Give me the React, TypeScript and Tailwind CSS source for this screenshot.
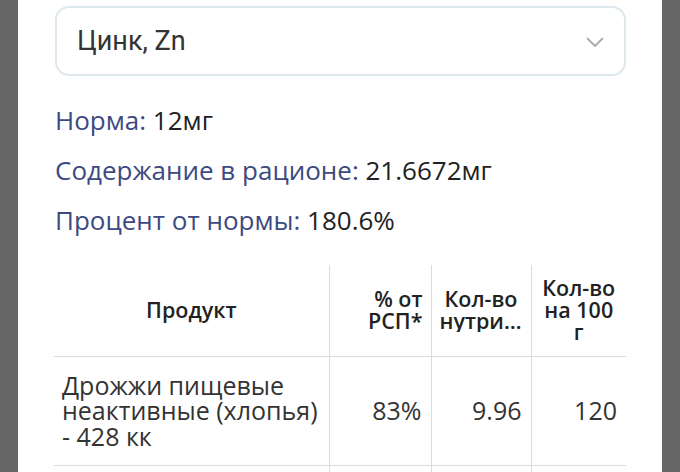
interface StatLineProps {
  label: string;
  value: string;
}

const StatLine: React.FC<StatLineProps> = ({ label, value }) => (
  <div className="text-[26px] leading-[30px] h-[30px] mb-[20px] whitespace-nowrap">
    <span className="text-[#3d4a7f] font-medium">{label}</span>{' '}
    <span className="text-[#222]">{value}</span>
  </div>
);

const rows = [
  { name: 'Дрожжи пищевые неактивные (хлопья) - 428 кк', percent: '83%', amount: '9.96', per100: '120' },
  { name: 'Семена тыквы - 559 кк', percent: '52%', amount: '6.24', per100: '7.8' },
];

export default function App() {
  return (
    <div className="w-[680px] h-[472px] overflow-hidden bg-[#666666] px-[18px] font-['Open_Sans',sans-serif]">
      <div className="h-full bg-white pl-[37px] pr-[36px] pt-[6px]">
        <button className="w-full h-[70px] flex items-center justify-between rounded-[14px] border-2 border-[#dde8ee] bg-white pl-[20px] pr-[20px]">
          <span className="font-['Roboto',sans-serif] text-[27px] text-[#333]">Цинк, Zn</span>
          <svg width="18" height="11" viewBox="0 0 18 11" className="mt-[3px]" fill="none">
            <path d="M1.5 1.5 L9 9 L16.5 1.5" stroke="#aaaaaa" strokeWidth="1.8" strokeLinecap="round" strokeLinejoin="round" />
          </svg>
        </button>

        <div className="mt-[29px]">
          <StatLine label="Норма:" value="12мг" />
          <StatLine label="Содержание в рационе:" value="21.6672мг" />
          <StatLine label="Процент от нормы:" value="180.6%" />
        </div>

        <table className="w-[572px] table-fixed border-collapse mt-[30px] -ml-[1px]">
          <colgroup>
            <col className="w-[275px]" />
            <col className="w-[102px]" />
            <col className="w-[100px]" />
            <col className="w-[95px]" />
          </colgroup>
          <thead>
            <tr className="h-[91px] border-b border-[#dcdcdc] text-[21.5px] leading-[22px] text-[#222]">
              <th className="px-2 text-center font-semibold">Продукт</th>
              <th className="px-2 text-right font-semibold border-l border-[#dcdcdc]">
                % от
                <br />
                РСП*
              </th>
              <th className="px-2 text-center font-semibold border-l border-[#dcdcdc]">
                <div>Кол-во</div>
                <div className="truncate">нутриента</div>
              </th>
              <th className="px-2 text-center font-semibold border-l border-[#dcdcdc]">
                Кол-во
                <br />
                на 100
                <br />г
              </th>
            </tr>
          </thead>
          <tbody>
            {rows.map((row) => (
              <tr key={row.name} className="border-b border-[#dcdcdc] text-[25px] leading-[25.5px] text-[#333]">
                <td className="pl-[8px] pr-2 py-[16px] text-left">{row.name}</td>
                <td className="px-[9px] text-right border-l border-[#dcdcdc]">{row.percent}</td>
                <td className="px-[9px] text-right border-l border-[#dcdcdc]">{row.amount}</td>
                <td className="px-[9px] text-right border-l border-[#dcdcdc]">{row.per100}</td>
              </tr>
            ))}
          </tbody>
        </table>
      </div>
    </div>
  );
}
